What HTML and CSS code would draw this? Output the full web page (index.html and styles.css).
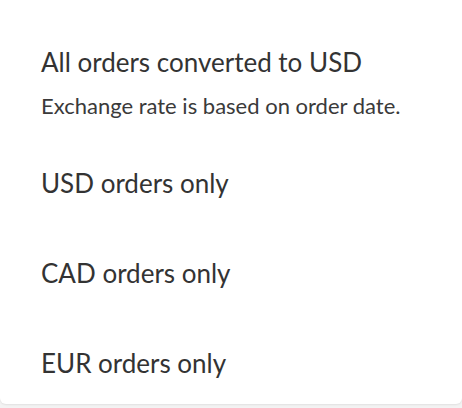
FILE: index.html
```html
<!DOCTYPE html>
<html>
<head>
<meta charset="utf-8">
<link rel="stylesheet" href="styles.css">
</head>
<body>
<div class="menu">
  <div class="option first">
    <div class="label">All orders converted to USD</div>
    <div class="hint">Exchange rate is based on order date.</div>
  </div>
  <div class="option">
    <div class="label">USD orders only</div>
  </div>
  <div class="option">
    <div class="label">CAD orders only</div>
  </div>
  <div class="option last">
    <div class="label">EUR orders only</div>
  </div>
</div>
</body>
</html>
```
FILE: styles.css
```css
html, body {
  margin: 0;
  padding: 0;
  background: #f3f3f3;
  height: 408px;
  overflow: hidden;
}
body {
  font-family: Lato, "Open Sans", sans-serif;
  color: #333;
}
.menu {
  background: #fff;
  height: 404px;
  box-sizing: border-box;
  border-radius: 0 0 6px 6px;
  box-shadow: 0 1px 2px rgba(0,0,0,0.08);
  padding-top: 17px;
  overflow: hidden;
}
.option {
  padding: 30px 41px;
}
.option.first {
  padding-bottom: 19px;
}
.option.last {
  padding-bottom: 25px;
}
.label {
  font-size: 26px;
  line-height: 30px;
}
.hint {
  font-size: 22px;
  line-height: 26px;
  margin-top: 16px;
  color: #3a3a3a;
}
```
